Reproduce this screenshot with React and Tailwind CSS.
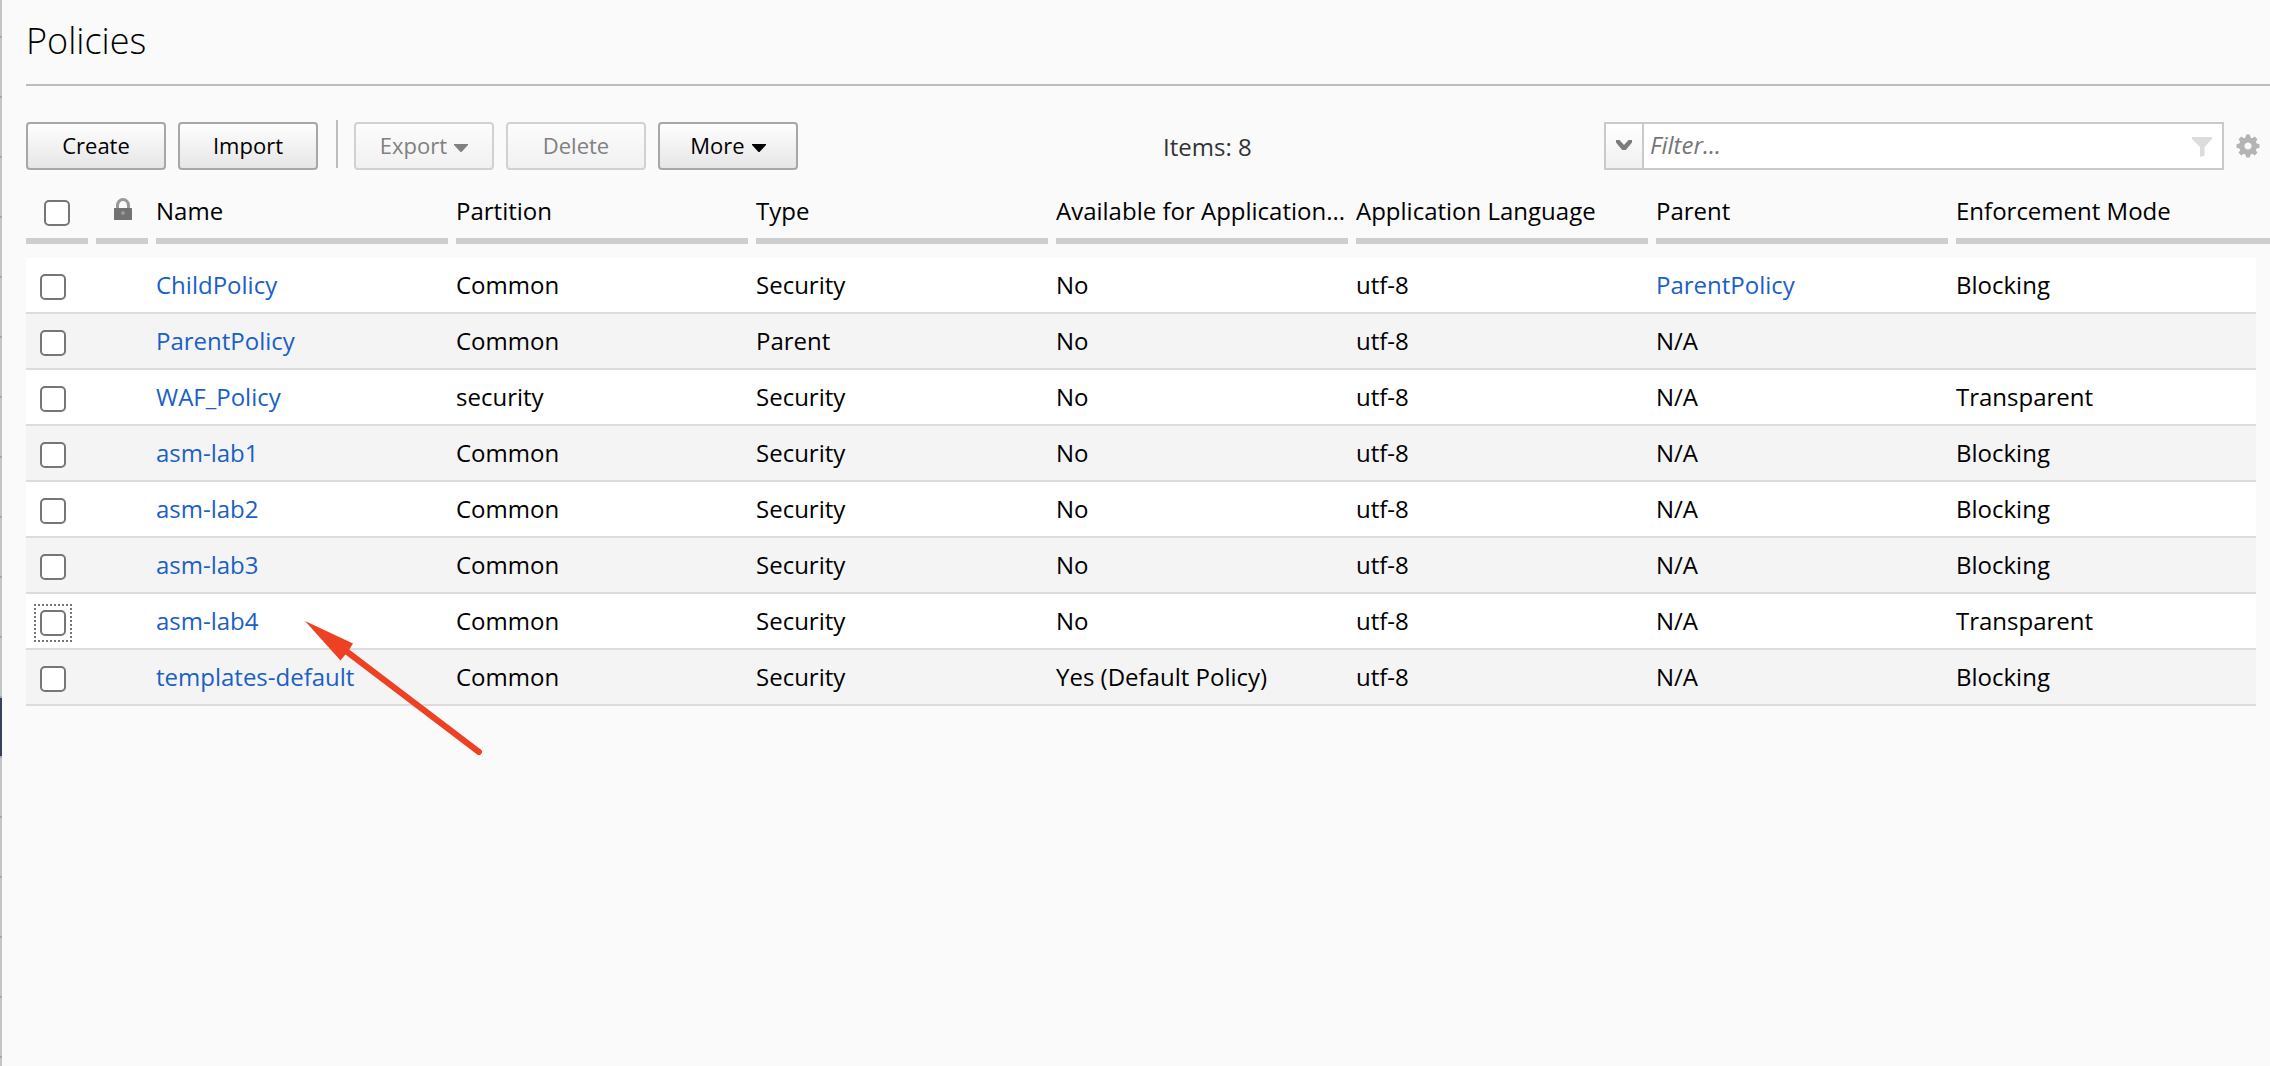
const COLS = "grid grid-cols-[62px_52px_292px_292px_292px_292px_292px_292px_1fr] gap-x-2";

const HEADERS = [
  "Name",
  "Partition",
  "Type",
  "Available for Application...",
  "Application Language",
  "Parent",
  "Enforcement Mode",
];

const ROWS = [
  ["ChildPolicy", "Common", "Security", "No", "utf-8", "ParentPolicy", "Blocking"],
  ["ParentPolicy", "Common", "Parent", "No", "utf-8", "N/A", ""],
  ["WAF_Policy", "security", "Security", "No", "utf-8", "N/A", "Transparent"],
  ["asm-lab1", "Common", "Security", "No", "utf-8", "N/A", "Blocking"],
  ["asm-lab2", "Common", "Security", "No", "utf-8", "N/A", "Blocking"],
  ["asm-lab3", "Common", "Security", "No", "utf-8", "N/A", "Blocking"],
  ["asm-lab4", "Common", "Security", "No", "utf-8", "N/A", "Transparent"],
  ["templates-default", "Common", "Security", "Yes (Default Policy)", "utf-8", "N/A", "Blocking"],
];

function Button({ children, disabled, caret }) {
  return (
    <button
      disabled={disabled}
      className={
        "flex h-12 w-[140px] items-center justify-center gap-[7px] rounded-[4px] border-2 pb-[3px] text-[22px] leading-none " +
        (disabled
          ? "border-[#d1d1d1] bg-linear-to-b from-[#fcfcfc] to-[#f1f1f1] text-[#808080]"
          : "border-[#a7a7a7] bg-linear-to-b from-[#fefefe] to-[#e6e6e6] text-black")
      }
    >
      {children}
      {caret && (
        <svg className="mt-[7px] h-2 w-3.5" viewBox="0 0 14 8" fill="currentColor">
          <path d="M0 0h14v1L7.500 8h-1L0 1z" />
        </svg>
      )}
    </button>
  );
}

function Checkbox({ focused }) {
  return (
    <span className="relative block size-[26px] rounded-[5px] border-2 border-[#767676] bg-white">
      {focused && (
        <svg className="absolute -top-2 -left-2 size-[38px] max-w-none" viewBox="0 0 38 38" fill="none">
          <path
            d="M0 1H38M0 37H38M1 4V38M37 4V38"
            stroke="#767676"
            strokeWidth="2"
            strokeDasharray="2 2"
          />
        </svg>
      )}
    </span>
  );
}

function Link({ children }) {
  return <a className="text-[#1b60c6]">{children}</a>;
}

function Arrow() {
  return (
    <svg className="absolute top-[610px] left-[295px] h-[156px] w-[196px]" viewBox="295 610 196 156">
      <path d="M346 651L479 752" stroke="#ee4023" strokeWidth="6" strokeLinecap="round" />
      <path d="M305 621L353 643.5L349 650L340.500 660.500Z" fill="#ee4023" />
    </svg>
  );
}

function Gear() {
  return (
    <svg className="mb-3 ml-3 size-6" viewBox="-12 -12 24 24" fill="none" stroke="#b4b4b4">
      <circle r="6.200" strokeWidth="5.200" />
      {[0, 45, 90, 135, 180, 225, 270, 315].map((a) => (
        <path
          key={a}
          d="M-3 -7L-1.800 -11.500H1.800L3 -7z"
          fill="#b4b4b4"
          stroke="none"
          transform={`rotate(${a})`}
        />
      ))}
    </svg>
  );
}

function Sidebar() {
  return (
    <div className="flex w-0.5 shrink-0 flex-col overflow-hidden">
      {Array.from({ length: 19 }, (_, i) => (
        <div
          key={i}
          className={
            "h-[60px] shrink-0 border-b-2 border-[#a5abb1] " +
            (i === 0 ? "mt-[-22px] bg-[#c3c6c9]" : i === 12 ? "bg-[#35435a]" : "bg-[#c3c6c9]")
          }
        />
      ))}
    </div>
  );
}

export default function App() {
  return (
    <div className="relative flex h-[1066px] w-[2270px] overflow-hidden bg-[#fafafa] font-['Open_Sans',sans-serif] text-[24px] text-black">
      <Sidebar />
      <main className="min-w-0 flex-1 pl-6">
        <h1 className="flex h-[86px] items-center border-b-2 border-[#bdbdbd] pb-0.5 text-[36px] leading-none font-light">
          Policies
        </h1>

        <div className="mt-[34px] flex h-[50px] items-end">
          <div className="flex gap-3">
            <Button>Create</Button>
            <Button>Import</Button>
          </div>
          <div className="mr-4 ml-[18px] h-12 w-0.5 self-start bg-[#bdbdbd]" />
          <div className="flex gap-3">
            <Button disabled caret>Export</Button>
            <Button disabled>Delete</Button>
            <Button caret>More</Button>
          </div>
          <div className="ml-[365px] flex h-12 w-[441px] items-center pt-0.5 text-[24px] text-[#333]">Items: 8</div>
          <div className="flex h-12 w-[620px] border-2 border-[#cacaca] bg-white">
            <div className="flex w-[38px] shrink-0 justify-center border-r-2 border-[#cacaca] bg-linear-to-b from-white to-[#f0f0f0] pt-4">
              <svg className="h-2.5 w-4" viewBox="0 0 16 10" fill="#7c7c7c">
                <path d="M0 0h3.500L8 5l4.500-5H16v2.500L9.800 10H6.200L0 2.500z" />
              </svg>
            </div>
            <div className="flex flex-1 items-center justify-between pr-2.5 pb-0.5 pl-1.5 text-[24px] text-[#767676] italic">
              Filter...
              <svg className="mt-1 h-5 w-5" viewBox="0 0 20 20" fill="#dcdcdc">
                <path d="M0 0h20v2l-7.500 8v8.500l-4.500 1.500V10L0 2z" />
              </svg>
            </div>
          </div>
          <Gear />
        </div>

        <div className={COLS + " mt-4"}>
          <div className="flex h-[58px] border-b-[6px] border-[#cecece] pt-[14px] pl-[18px]">
            <Checkbox />
          </div>
          <div className="h-[58px] border-b-[6px] border-[#cecece] pt-3 pl-[18px]">
            <svg className="h-[22px] w-[18px]" viewBox="0 0 18 22">
              <path d="M3.500 11V7.500a5.500 6 0 0 1 11 0V11" fill="none" stroke="#999" strokeWidth="3" />
              <rect y="10" width="18" height="12" rx="0.500" fill="#727272" />
              <circle cx="9" cy="15" r="2" fill="#999" />
            </svg>
          </div>
          {HEADERS.map((h) => (
            <div key={h} className="h-[58px] border-b-[6px] border-[#cecece] pt-[7px] leading-9 whitespace-nowrap">
              {h}
            </div>
          ))}
        </div>

        <div className="mt-3.5 w-[2230px]">
          {ROWS.map((row, i) => (
            <div
              key={row[0]}
              className={COLS + " h-14 border-b-2 border-[#dcdcdc] leading-[54px] odd:bg-white even:bg-[#f4f4f4]"}
            >
              <div className="pt-4 pl-3.5">
                <Checkbox focused={i === 6} />
              </div>
              <div />
              {row.map((cell, c) => (
                <div key={c} className="whitespace-nowrap">
                  {c === 0 || (c === 5 && cell !== "N/A") ? <Link>{cell}</Link> : cell}
                </div>
              ))}
            </div>
          ))}
        </div>
      </main>
      <Arrow />
    </div>
  );
}
